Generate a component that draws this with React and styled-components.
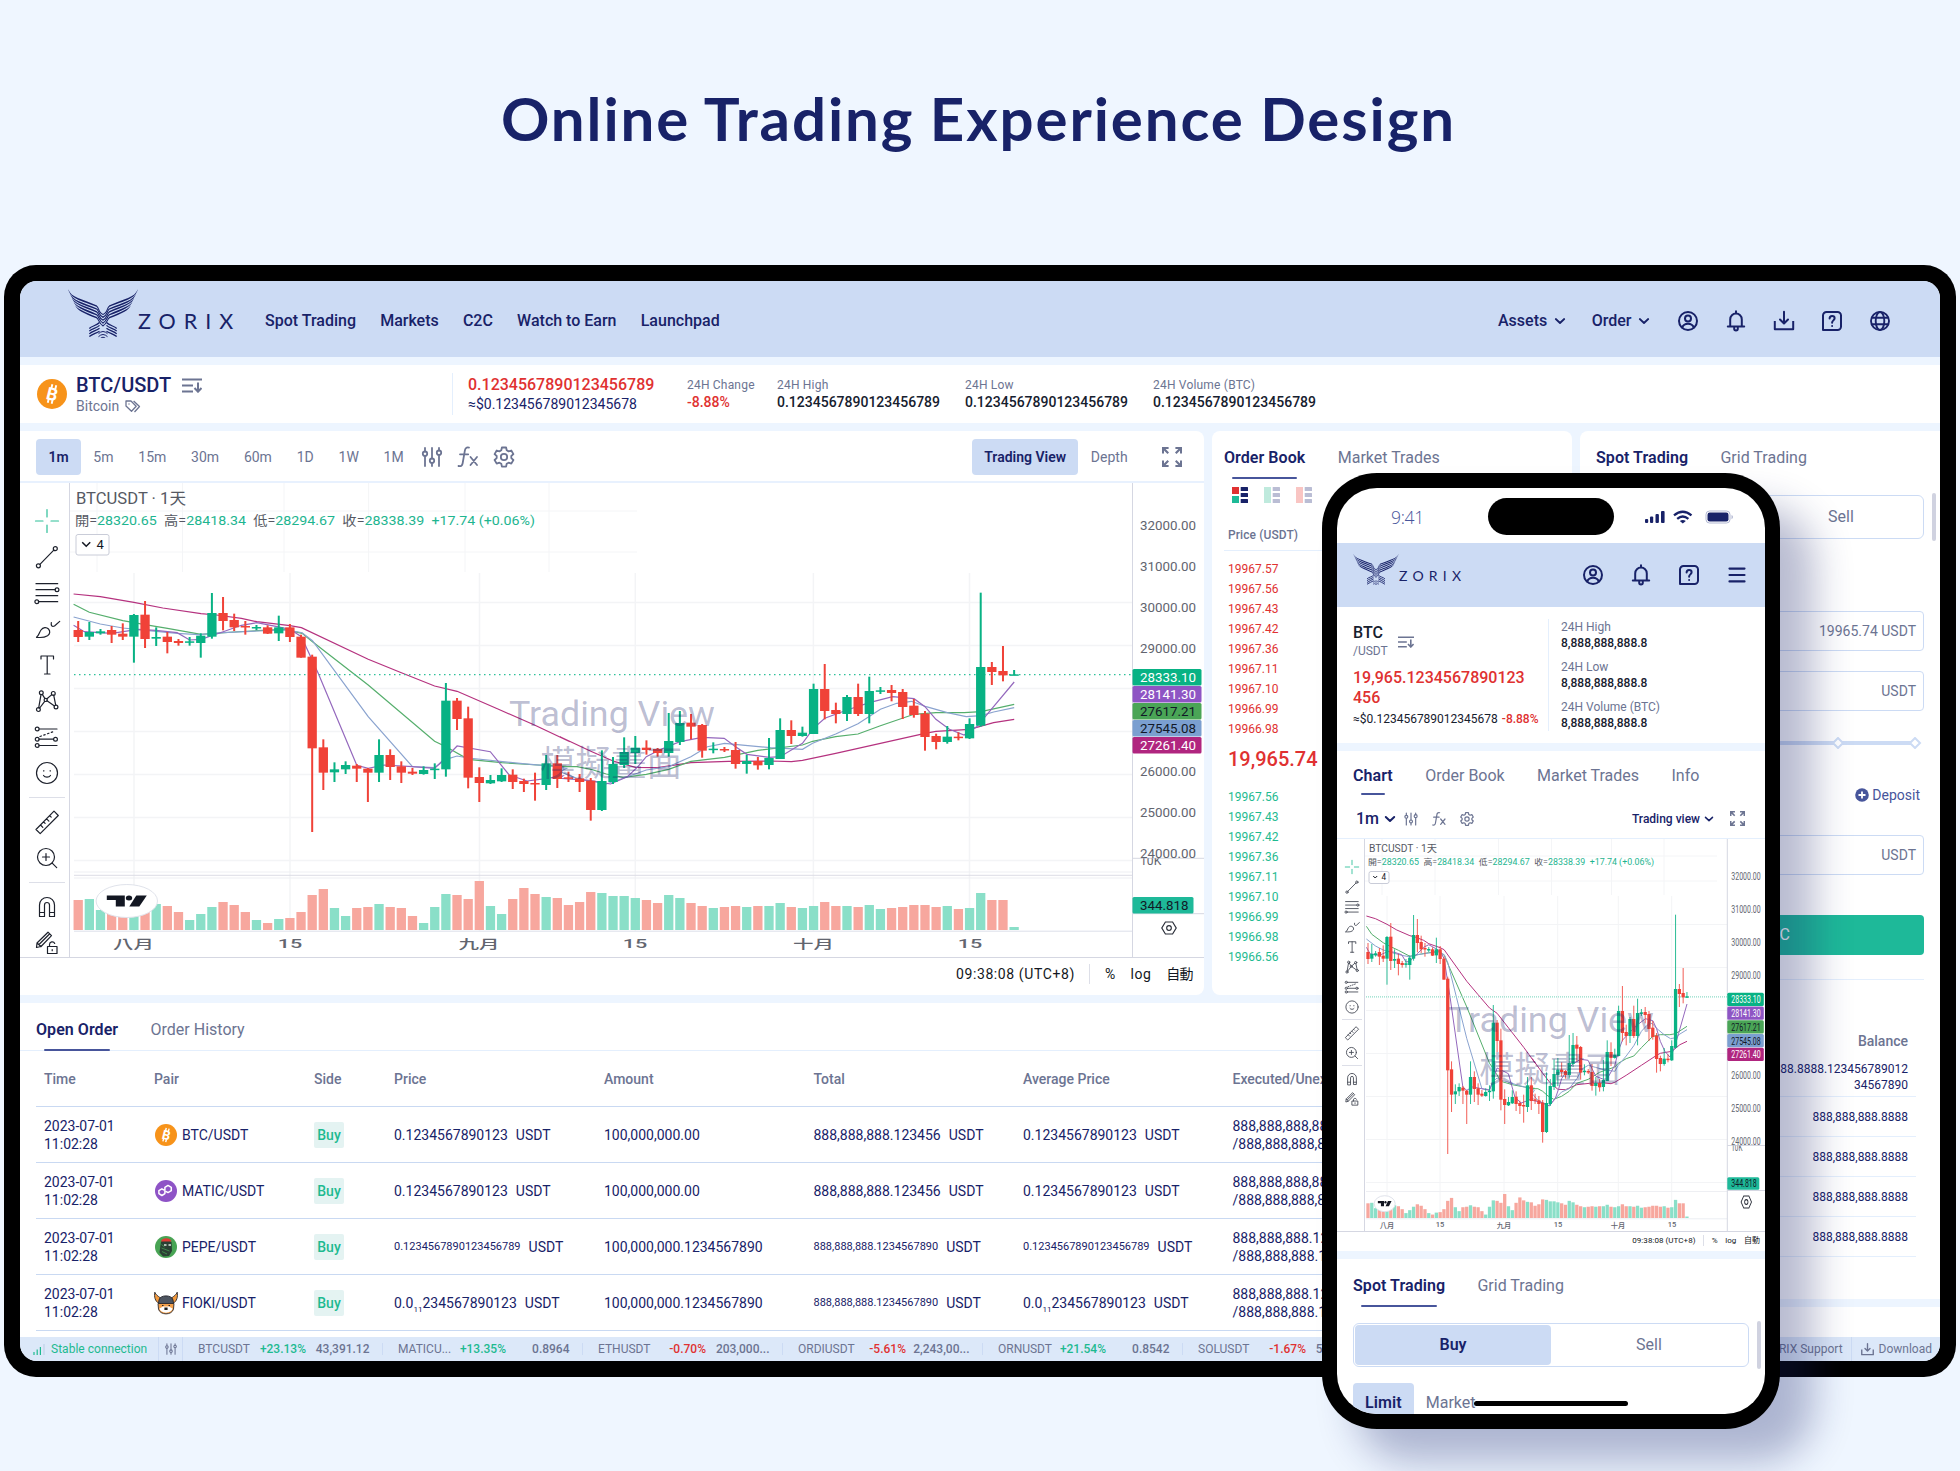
import React from "react";
import styled, { createGlobalStyle, css } from "styled-components";

const c = {
  page: "#eff6ff",
  gap: "#edf5ff",
  head: "#ccdbf4",
  foot: "#dce8f9",
  navy: "#182268",
  ink: "#16202e",
  grey: "#6c7492",
  rule: "#c9d9f2",
  soft: "#e4effd",
  red: "#e03131",
  green: "#1eba90",
  accent: "#47559b",
};

const FONT = 'Roboto, "Noto Sans CJK TC", sans-serif';

const GlobalStyle = createGlobalStyle`
  * { box-sizing: border-box; }
  body { margin: 0; background: ${c.page}; font-family: ${FONT}; color: ${c.navy}; }
  svg { display: block; flex: none; }
`;

/* ---------- shell ---------- */

const Stage = styled.div`
  position: relative;
  width: 1960px;
  height: 1471px;
  overflow: hidden;
  background: ${c.page};
  padding: 83px 4px 0;
`;
const Title = styled.h1`
  margin: 0;
  height: 182px;
  padding-right: 3px;
  text-align: center;
  font: 700 60px/70px Lato, sans-serif;
  letter-spacing: 1.9px;
  word-spacing: -1px;
  white-space: nowrap;
`;
const Tablet = styled.div`
  width: 1952px;
  height: 1112px;
  padding: 16px;
  border-radius: 32px;
  background: #000;
`;
const TabletScreen = styled.div`
  width: 1920px;
  height: 1080px;
  overflow: hidden;
  border-radius: 17px;
  background: ${c.gap};
  display: flex;
  flex-direction: column;
`;
const Phone = styled.div`
  position: absolute;
  left: 1322px;
  top: 473px;
  width: 458px;
  height: 956px;
  padding: 15px;
  border-radius: 55px;
  background: #000;
  box-shadow: 34px 33px 38px rgba(24, 34, 104, 0.3);
`;
const PhoneScreen = styled.div`
  position: relative;
  height: 926px;
  overflow: hidden;
  border-radius: 40px;
  background: #fff;
  display: flex;
  flex-direction: column;
  > * { flex: none; }
`;

/* ---------- icons ---------- */

const Svg = ({ size = 24, w = 1.6, children, color = "currentColor", box = 24 }) => (
  <svg width={size} height={size} viewBox={`0 0 ${box} ${box}`} fill="none" stroke={color} strokeWidth={w} strokeLinecap="round" strokeLinejoin="round" overflow="visible">
    {children}
  </svg>
);
const UserIcon = () => (
  <Svg w={2}>
    <circle cx="12" cy="12" r="9" />
    <circle cx="12" cy="9.600" r="3" />
    <path d="M6.200 18.600c.9-2.600 3-3.900 5.800-3.900s4.900 1.300 5.800 3.900" />
  </Svg>
);
const BellIcon = () => (
  <Svg w={2}>
    <path d="M12 2.200v2M3.800 17.600h16.400M6.200 17.400v-7a5.800 5.800 0 0 1 11.600 0v7" />
    <path d="M10.200 18.500v1.200a1.800 1.800 0 0 0 3.600 0v-1.200" />
  </Svg>
);
const DownloadIcon = ({ size = 24, w = 2 }) => (
  <Svg size={size} w={w}>
    <path d="M12 2.800v11.500M8 10.500l4 4 4-4" />
    <path d="M2.800 12v8.200h18.400V12" strokeLinecap="butt" />
  </Svg>
);
const HelpIcon = () => (
  <Svg w={2}>
    <path d="M3 21V6.500A3.500 3.500 0 0 1 6.500 3h11A3.500 3.500 0 0 1 21 6.500v11a3.500 3.500 0 0 1-3.500 3.500z" />
    <path d="M9.600 9.600c0-1.600 1-2.600 2.500-2.600s2.500 1 2.500 2.300c0 2-2.500 2.200-2.500 4.400" />
    <path d="M12.100 16.900v.2" />
  </Svg>
);
const GlobeIcon = () => (
  <Svg w={1.9}>
    <circle cx="12" cy="12" r="9" />
    <ellipse cx="12" cy="12" rx="4.300" ry="9" />
    <path d="M4 8.700h16M4 15.300h16" />
  </Svg>
);
const MenuIcon = () => (
  <Svg w={2.2}>
    <path d="M4.500 5.600h15M4.500 12h15M4.500 18.400h15" />
  </Svg>
);
const Chevron = ({ size = 12, w = 1.8 }) => (
  <Svg size={size} w={w} box={12}>
    <path d="M1.800 4l4.200 4 4.200-4" />
  </Svg>
);
const SortIcon = ({ width = 20 }) => (
  <svg width={width} height={width * 0.75} viewBox="0 0 20 15" fill="none" stroke={c.grey} strokeWidth="2">
    <path d="M0 1.500h20M0 7.500h11M0 13.500h11M16 4.500v9M12.500 10l3.500 3.700 3.500-3.700" />
  </svg>
);
const TagIcon = () => (
  <svg width="16" height="13" viewBox="0 0 16 13" fill="none" stroke={c.grey} strokeWidth="1.300" strokeLinejoin="round">
    <path d="M1 1h5l5.200 5.300-4.700 5L1 6z" />
    <path d="M8.600 1l5.900 5.500-5 5.500" />
    <circle cx="4" cy="4" r=".7" fill={c.grey} stroke="none" />
  </svg>
);
const SlidersIcon = ({ size = 24 }) => (
  <Svg size={size} w={1.8} color={c.grey}>
    <path d="M5 3v3.500M5 11v10M12 3v10.500M12 18v3M19 3v2.500M19 10v11" />
    <circle cx="5" cy="8.700" r="2.200" />
    <circle cx="12" cy="15.700" r="2.200" />
    <circle cx="19" cy="7.700" r="2.200" />
  </Svg>
);
const FxIcon = ({ size = 24 }) => (
  <Svg size={size} w={1.8} color={c.grey}>
    <path d="M13 2.600c-2.800-.6-3.800.8-4.200 3.200L6.700 18c-.4 2.600-1.600 3.600-4.200 3M4 9.300h8.200M14.500 12l6.500 8M21 12l-6.500 8" />
  </Svg>
);
const GearIcon = ({ size = 24 }) => (
  <Svg size={size} w={1.8} color={c.grey}>
    <path d="M9.900 2.500h4.200l.6 2.800 1.900 1.100 2.700-.9 2.100 3.600-2.100 1.900v2.100l2.100 1.900-2.100 3.600-2.700-.9-1.900 1.100-.6 2.800H9.900l-.6-2.800-1.900-1.100-2.700.9L2.600 15l2.100-1.900V11L2.600 9.100l2.100-3.600 2.700.9 1.900-1.100z" />
    <circle cx="12" cy="12" r="3.200" />
  </Svg>
);
const ExpandIcon = ({ size = 20 }) => (
  <svg width={size} height={size} viewBox="0 0 20 20" fill={c.grey}>
    {[0, 90, 180, 270].map((r) => (
      <path key={r} transform={`rotate(${r} 10 10)`} d="M0 0h6.600v2H3.600L7 5.500 5.500 7 2 3.600v3H0z" />
    ))}
  </svg>
);

const feathers = [0, 1, 2, 3, 4];
const Bird = ({ width = 70 }) => (
  <svg width={width} height={width * 0.714} viewBox="0 0 70 50" fill="none" stroke={c.navy} strokeWidth="1.100">
    {[false, true].map((flip) => (
      <g key={String(flip)} transform={flip ? "translate(70 0) scale(-1 1)" : undefined}>
        {feathers.map((k) => {
          const x = 0.3 + 1.7 * k;
          const y = 0.3 + 3.9 * k;
          return (
            <path key={k} stroke="none" fill={c.navy} d={`M${x} ${y}C${x + 2.4} ${y + 8.5 - k} ${14 + k * 0.6} ${9.8 + 3.1 * k} 29 ${16.5 + 2.9 * k}v1.4C${13.2 + k * 0.6} ${11.9 + 3.1 * k} ${x + 1.4} ${y + 9.1 - k} ${x} ${y}z`} />
          );
        })}
        {feathers.map((k) => (
          <path key={k} d={`M29 ${17.3 + 2.9 * k}C31 ${19.5 + 2.9 * k} 31 ${24.5 + 2.5 * k} 35.2 ${25.5 + 2.9 * k}`} />
        ))}
        {[0, 1, 2, 3].map((k) => (
          <path key={k} d={`M31.5 ${33.5 + k * 2.9}C28.5 ${37 + k * 2.4} 24 ${36.5 + k * 2.9} 21.3 ${39.5 + k * 2.7}`} strokeWidth="1.300" />
        ))}
        <path d="M35 42.500q-2.500.2-4.500 2.200M35 45.500q-2.500.2-4.500 2.200M35 48.300q-1.500 0-2.500 1" strokeWidth="1" />
      </g>
    ))}
  </svg>
);

const BtcCoin = ({ size = 22 }) => (
  <svg width={size} height={size} viewBox="0 0 30 30">
    <circle cx="15" cy="15" r="15" fill="#f7931a" />
    <g transform="rotate(14 15 15)" fill="#fff" stroke="#fff">
      <path d="M13 5.500v4M17 5.500v4M13 20.500v4M17 20.500v4" strokeWidth="1.900" />
      <text x="15.300" y="21.200" textAnchor="middle" stroke="none" fontFamily="Roboto, sans-serif" fontSize="17.500" fontWeight="700">B</text>
    </g>
  </svg>
);
const MaticCoin = () => (
  <svg width="22" height="22" viewBox="0 0 22 22" fill="none" stroke="#fff" strokeWidth="1.500">
    <circle cx="11" cy="11" r="11" fill="#8e53c6" stroke="none" />
    <path d="M10.800 11.300l2.200 1.300 3.300-1.900V7.300L13 5.400 9.900 7.300v6.300l-3 1.900-3-1.900v-3l3-1.800 2.200 1.300" strokeLinejoin="round" />
  </svg>
);
const PepeCoin = () => (
  <svg width="22" height="22" viewBox="0 0 22 22">
    <circle cx="11" cy="11" r="11" fill="#48a454" />
    <path d="M6 5.500L11 3l5.500 3 .5 9-3 5-6 .5-3.500-4z" fill="#2b4034" />
    <path d="M6 5.500C6.500 1 16 1 16.500 5.500z" fill="#e03a35" />
    <path d="M9 9h2.500M13.500 9H16" stroke="#dfe8df" strokeWidth="1.400" />
    <path d="M6.500 12l8 3M7 15.500l5 2.500M6.500 8.500l3 2.500" stroke="#3f8a4b" strokeWidth="1" />
  </svg>
);
const FlokiCoin = () => (
  <svg width="24" height="24" viewBox="0 0 24 24">
    <path d="M.8 1.200C1.800 4 4 5 6.500 7L5 12.500C1 10 0 6 .8 1.200zM23.200 1.200C22.200 4 20 5 17.500 7l1.500 5.500c4-2.500 5-6.500 4.200-11.300z" fill="#f39a3d" stroke="#2b2a30" strokeWidth=".9" />
    <path d="M5 9C6 3.500 18 3.500 19 9l.5 3.500h-15z" fill="#4d5560" stroke="#22242a" strokeWidth=".9" />
    <path d="M4 12.500h16l-.5 5.500c-1.500 6.500-13.500 6.500-15 0z" fill="#f4a04a" stroke="#2b2a30" strokeWidth=".9" />
    <path d="M5.500 17.500L9 15.500h6l3.500 2c-1 5.500-12 5.500-13 0z" fill="#fff" />
    <path d="M8 14.500h1.500M14.500 14.500H16M11 17h2v1.500h-2z" stroke="#222" strokeWidth="1.200" />
  </svg>
);

/* ---------- brand ---------- */

const BrandBox = styled.div`
  display: flex;
  width: ${(p) => (p.$small ? 120 : 197)}px;
  > svg { margin-top: ${(p) => (p.$small ? -12 : -15)}px; }
`;
const Word = styled.span`
  padding-top: ${(p) => (p.$small ? 1 : 2)}px;
  font: 400 ${(p) => (p.$small ? 14 : 21.5)}px / ${(p) => (p.$small ? 20 : 30)}px Lato, sans-serif;
  letter-spacing: ${(p) => (p.$small ? 5.2 : 8)}px;
`;
const Brand = ({ small }) => (
  <BrandBox $small={small}>
    <Bird width={small ? 46 : 70} />
    <Word $small={small}>ZORIX</Word>
  </BrandBox>
);

/* ---------- header ---------- */

const Header = styled.header`
  height: 76px;
  padding: 4px 48px 0;
  background: ${c.head};
  display: flex;
  align-items: center;
  font: 500 16px/24px ${FONT};
`;
const Nav = styled.nav`
  display: flex;
  gap: 24.2px;
  flex: 1;
`;
const Dropdown = styled.span`
  display: flex;
  align-items: center;
  gap: 6.5px;
  margin-right: 26px;
`;
const IconRow = styled.div`
  display: flex;
  gap: 24px;
`;

/* ---------- pair bar ---------- */

const PairBar = styled.section`
  height: 58px;
  margin: 8px 0;
  padding: 0 17px;
  background: #fff;
  display: flex;
  align-items: center;
`;
const PairInfo = styled.div`
  width: 415px;
  display: flex;
  align-items: center;
  gap: 9px;
`;
const PairName = styled.div`
  display: flex;
  align-items: center;
  gap: 11px;
  padding-top: 2px;
  font: 500 20px/23px ${FONT};
`;
const PairSub = styled.div`
  display: flex;
  align-items: center;
  gap: 6px;
  font: 400 14px/19px ${FONT};
  color: ${c.grey};
`;
const PriceCol = styled.div`
  width: 235px;
  height: 42px;
  padding: 1px 0 0 15px;
  border-left: 1px solid ${c.soft};
  font: 400 14px/20px ${FONT};
  strong { display: block; margin-bottom: -2px; font: 500 16px/22px ${FONT}; color: ${c.red}; }
`;
const Stat = styled.div`
  width: ${(p) => p.$w || 188}px;
  padding-bottom: ${(p) => (p.$tight ? 0 : 2)}px;
  font: 400 12px / ${(p) => (p.$tight ? 16 : 18)}px ${FONT};
  letter-spacing: ${(p) => (p.$tight ? 0 : 0.2)}px;
  color: ${c.grey};
  b {
    display: block;
    font: 500 ${(p) => (p.$tight ? 12 : 14)}px/16px ${FONT};
    letter-spacing: 0;
    color: ${(p) => (p.$down ? c.red : c.ink)};
  }
`;

/* ---------- body layout ---------- */

const Body = styled.main`
  display: flex;
  gap: 8px;
  height: 906px;
`;
const Column = styled.div`
  width: ${(p) => p.$w}px;
  display: flex;
  flex-direction: column;
  gap: 8px;
`;
const TopRow = styled.div`
  display: flex;
  gap: 8px;
  height: 564px;
`;
const Card = styled.section`
  width: ${(p) => (p.$w ? p.$w + "px" : "auto")};
  height: ${(p) => (p.$h ? p.$h + "px" : "auto")};
  flex: ${(p) => (p.$grow ? 1 : "none")};
  border-radius: ${(p) => p.$r || 0};
  background: #fff;
  overflow: hidden;
`;

/* ---------- tabs ---------- */

const TabBar = styled.div`
  height: ${(p) => p.$h || 48}px;
  padding: ${(p) => (p.$h ? 14 : 16)}px ${(p) => p.$px ?? 16}px 0;
  display: flex;
  gap: 32.4px;
  font: 400 16px/22px ${FONT};
  color: ${c.grey};
  ${(p) => p.$line && css`box-shadow: inset 0 -1px 0 ${c.soft};`}
`;
const TabItem = styled.span`
  display: flex;
  flex-direction: column;
  justify-content: space-between;
  ${(p) => p.$on && css`
    color: ${c.navy};
    font-weight: 600;
    letter-spacing: 0.06px;
    &::after { content: ""; height: 2px; margin: 0 8px; background: ${c.accent}; border-radius: 1px; }
  `}
`;
const Tabs = ({ items, ...rest }) => (
  <TabBar {...rest}>
    {items.map((t, i) => (
      <TabItem key={t} $on={i === 0}>{t}</TabItem>
    ))}
  </TabBar>
);

/* ---------- chart ---------- */

const G = 1;
const R = 0;
/* wick top, body top, body bottom, wick bottom, direction, volume */
const candles = [
  [453, 480, 501, 516, R, 90], [456, 486, 500, 510, G, 93], [477, 484, 490, 494, G, 60], [468, 480, 494, 519, R, 50],
  [460, 491, 500, 510, R, 50], [432, 435, 500, 578, G, 60], [393, 434, 507, 534, R, 55], [472, 501, 506, 528, G, 78],
  [486, 500, 516, 550, R, 72], [507, 513, 519, 527, R, 54], [501, 514, 517, 527, G, 30], [490, 497, 519, 563, G, 48],
  [369, 429, 500, 506, G, 69], [381, 429, 453, 481, R, 84], [431, 450, 472, 483, R, 75], [453, 468, 472, 494, R, 54],
  [465, 471, 474, 480, G, 30], [466, 472, 491, 492, R, 21], [437, 472, 490, 513, G, 33], [462, 472, 501, 516, R, 36],
  [494, 500, 563, 563, R, 54], [554, 560, 835, 1086, R, 105], [808, 832, 908, 960, R, 123], [877, 898, 907, 936, G, 66],
  [874, 885, 898, 912, G, 42], [882, 887, 896, 936, R, 66], [894, 896, 908, 996, R, 69], [808, 855, 908, 936, G, 78],
  [838, 855, 891, 930, R, 69], [874, 889, 908, 939, R, 66], [894, 905, 911, 915, R, 42], [889, 900, 912, 914, G, 21],
  [880, 896, 900, 927, G, 69], [639, 692, 898, 920, G, 108], [684, 692, 747, 780, R, 105], [710, 745, 923, 955, R, 93],
  [892, 921, 939, 996, R, 147], [915, 930, 940, 942, G, 72], [895, 915, 934, 936, G, 48], [898, 914, 936, 957, R, 93],
  [926, 933, 942, 966, R, 126], [908, 939, 943, 992, R, 108], [855, 880, 945, 960, G, 99], [855, 880, 927, 954, R, 96],
  [905, 922, 926, 936, R, 75], [912, 925, 936, 966, R, 84], [924, 932, 1020, 1052, R, 114], [841, 933, 1020, 1023, G, 111],
  [861, 882, 936, 942, G, 102], [802, 846, 885, 894, G, 102], [798, 833, 849, 882, G, 96], [811, 833, 840, 854, R, 90],
  [834, 837, 849, 860, R, 81], [729, 813, 849, 860, G, 105], [723, 759, 816, 825, G, 96], [732, 758, 770, 808, R, 81],
  [762, 765, 842, 863, R, 72], [817, 836, 840, 850, G, 66], [831, 837, 841, 846, R, 69], [816, 840, 882, 896, R, 72],
  [855, 873, 882, 911, G, 69], [861, 873, 886, 899, R, 72], [804, 864, 885, 898, G, 72], [745, 780, 867, 867, G, 81],
  [751, 780, 798, 822, R, 69], [770, 788, 798, 800, G, 66], [641, 657, 792, 792, G, 72], [582, 657, 723, 748, R, 84],
  [698, 720, 732, 760, R, 72], [675, 681, 732, 753, G, 72], [641, 681, 732, 738, R, 69], [620, 663, 732, 760, G, 75],
  [651, 661, 664, 672, G, 63], [645, 660, 669, 694, R, 66], [657, 666, 711, 747, R, 69], [687, 707, 735, 743, R, 75],
  [723, 731, 801, 842, R, 75], [791, 798, 816, 838, R, 69], [768, 800, 816, 821, G, 72], [787, 800, 803, 811, R, 63],
  [745, 762, 805, 807, G, 66], [368, 591, 767, 770, G, 111], [576, 591, 606, 645, R, 90], [528, 603, 616, 634, R, 90],
  [600, 613, 615, 615, G, 9],
];

/* moving averages: the first list spans bars 0-45, the second bars 44-84 */
const early = ([x, v]) => [(x - 163) / 31.2, v];
const late = ([x, v]) => [44 + (x - 20) / 26.47, v + 270];
const averages = [
  ["#b5327f", [[150, 372], [225, 380], [319, 397], [400, 414], [507, 431], [550, 435], [620, 445], [663, 455], [756, 467], [788, 473], [975, 568], [1068, 608], [1161, 648], [1224, 664], [1340, 718], [1442, 766], [1540, 815]],
    [[0, 530], [73, 574], [126, 603], [179, 622], [232, 623], [311, 608], [400, 604], [500, 603], [550, 605], [576, 601], [655, 580], [761, 550], [867, 520], [893, 514], [973, 508], [1030, 488], [1079, 478]]],
  ["#55ae6c", [[150, 403], [194, 427], [288, 452], [350, 464], [413, 475], [507, 493], [600, 486], [663, 482], [740, 478], [790, 490], [819, 515], [975, 645], [1161, 814], [1193, 830], [1255, 868], [1349, 878], [1450, 885], [1530, 889]],
    [[0, 620], [40, 620], [73, 628], [110, 642], [150, 652], [205, 643], [258, 628], [311, 604], [391, 592], [470, 571], [576, 555], [600, 544], [655, 530], [708, 522], [761, 497], [841, 463], [893, 458], [960, 458], [1000, 455], [1079, 433]]],
  ["#8aa3cf", [[150, 441], [225, 462], [288, 474], [360, 482], [440, 490], [500, 494], [569, 488], [663, 483], [750, 480], [790, 488], [819, 512], [975, 740], [1099, 890], [1161, 893], [1193, 868], [1224, 858], [1255, 864], [1400, 880], [1500, 890], [1530, 895]],
    [[0, 635], [40, 655], [110, 672], [150, 655], [205, 630], [258, 620], [311, 590], [350, 560], [391, 550], [440, 556], [500, 563], [576, 568], [600, 550], [655, 522], [708, 491], [761, 448], [800, 430], [835, 424], [870, 440], [920, 458], [965, 470], [1000, 467], [1030, 456], [1079, 443]]],
  ["#9468bd", [[150, 466], [180, 485], [257, 490], [330, 478], [380, 481], [440, 488], [475, 510], [507, 508], [569, 485], [620, 466], [663, 458], [720, 470], [756, 478], [788, 500], [835, 610], [943, 886], [975, 895], [1020, 885], [1099, 890], [1161, 895], [1190, 865], [1224, 828], [1317, 845], [1370, 915], [1420, 933], [1473, 926], [1520, 918]],
    [[0, 655], [73, 662], [120, 672], [160, 650], [185, 620], [205, 590], [240, 568], [285, 545], [338, 532], [390, 535], [417, 560], [444, 583], [497, 592], [523, 590], [576, 550], [602, 505], [629, 475], [682, 450], [735, 428], [790, 410], [841, 416], [867, 440], [893, 478], [925, 508], [960, 525], [990, 500], [1020, 455], [1079, 366]]],
].map(([color, a, b]) => [color, [...a.map(early), ...b.map(late)]]);

const badges = [
  ["28333.10", "#08b284", "#fff"],
  ["28141.30", "#8e55c4", "#fff"],
  ["27617.21", "#4aa556", "#111827"],
  ["27545.08", "#7b9fd0", "#111827"],
  ["27261.40", "#b0257f", "#fff"],
];

const wide = {
  w: 1134, h: 474, x0: 8.2, dx: 11.142, y0: -13, left: 4, body: 9.3, wick: 2, ma: 1.2,
  gridX: [64, 220, 409.5, 565.3, 743.4, 899.5], grid: 119.5, gridTop: 90, gridW: 1.5,
  topX: [27, 112.5, 214, 298.6, 395, 479], topY: [28, 69], topW: 567, dot: 191.7,
  axis: 1062.5, vol: 447, volK: 1, rules: [389, 392.3, 395], base: 447.7,
  labels: [42.6, 83.7, 124.3, 165.7, 288.7, 329.7, 370.7], lx: 1070, lw: 56, fs: 12.5,
  tenK: 375.3, badge: 186, bh: 17, bw: 69, last: [414, 16.5, 61], lastLine: 430.7, hex: [1099, 445, 1],
  dates: ["八月", "15", "九月", "15", "十月", "15"], dy: 465.5, dfs: 12.5, dw: [41, 24.5], dateX: [63.5, 220, 409, 565, 743.5, 900],
  tv: [56.8, 418, 30.7, 16.5], mark: [542, 243, 292.5], legend: [6, 21, 110, 16, 42.3, 460, 13, 6, 51, 33, 20.5, 4],
};
const narrow = {
  w: 400, h: 392, x0: 3, dx: 3.797, y0: -47, left: 1, body: 3.3, wick: 1, ma: 1,
  gridX: [22, 75, 139, 192.7, 253.3, 306.7], grid: 85.5, gridTop: 57, gridW: 1,
  topX: [17, 70, 133.5, 186.5, 246.5, 299], topY: [17, 42], topW: 352, dot: 157.9,
  axis: 362.3, vol: 379, volK: 0.49, rules: [352.5], base: 379.3,
  labels: [37.7, 70.7, 103.7, 136.7, 236.3, 269.7, 302.7], lx: 366.3, lw: 29.3, fs: 10.5,
  tenK: 306.5, badge: 153.7, bh: 13.75, bw: 36.5, last: [338.3, 12.4, 32], lastLine: 351.5, hex: [381.3, 363, 0.72],
  dates: ["八月", "15", "九月", "15", "十月", "15"], dy: 388.5, dfs: 7.3, dw: [14.5, 8.5], dateX: [22, 75, 139, 193, 253, 307],
  tv: [19.7, 364.7, 10.5, 8], mark: [186, 193, 243], legend: [4, 13, 68, 10, 26.2, 286, 8.2, 4, 32, 20, 12, 2.5],
};

const Fit = ({ w, children, ...rest }) => (
  <text textLength={w} lengthAdjust="spacingAndGlyphs" {...rest}>{children}</text>
);

const Plot = ({ s }) => {
  const X = (i) => s.x0 + s.dx * i;
  const Y = (v) => s.y0 + v / 3;
  const [lx, ly, lw, lf, oy, ow, of, bx, by, bw, bh] = s.legend;
  const small = s === narrow;
  return (
    <svg width={s.w} height={s.h} viewBox={`0 0 ${s.w} ${s.h}`} fontFamily={FONT}>
      <g stroke="#f4f5f7" strokeWidth="1">
        {s.topX.map((x) => <path key={x} d={`M${x} 0V${s.gridTop - 1}`} />)}
        {s.topY.map((y) => <path key={y} d={`M0 ${y}H${s.topW}`} />)}
      </g>
      <g stroke="#f3f4f6" strokeWidth={s.gridW}>
        {s.gridX.map((x) => <path key={x} d={`M${x} ${s.gridTop}V${s.base}`} />)}
        {[0, 1, 2, 3, 4, 5, 6].map((k) => <path key={k} d={`M${s.left} ${s.grid + 43 * k}H${s.axis}`} />)}
      </g>
      {s.rules.map((y, i) => (
        <path key={y} d={`M${s.left} ${y}H${s.axis}`} stroke={i === 1 ? "#dcdde5" : "#eeeff3"} />
      ))}
      <path d={`M${s.left} ${s.base + 0.5}H${s.axis}`} stroke={small ? "#eceef3" : "#dcdfea"} />
      {candles.map((k, i) => {
        const h = (k[5] / 3) * s.volK;
        return <rect key={i} x={X(i) - s.body / 2} y={s.vol - h} width={s.body} height={h} fill={k[4] ? "#8adfc8" : "#f7a79e"} />;
      })}
      {averages.map(([color, pts]) => (
        <polyline key={color} fill="none" stroke={color} strokeWidth={s.ma} points={pts.map(([i, v]) => `${X(i).toFixed(1)},${Y(v).toFixed(1)}`).join(" ")} />
      ))}
      <path d={`M${s.left} ${s.dot}H${s.axis}`} stroke={small ? "#8edcc8" : "#2cbf98"} strokeWidth="1.200" strokeDasharray={small ? "1 1" : "1.500 3.500"} />
      {candles.map((k, i) => (
        <g key={i} fill={k[4] ? "#08b284" : "#f04238"}>
          <rect x={X(i) - s.wick / 2} y={Y(k[0])} width={s.wick} height={(k[3] - k[0]) / 3} opacity={small ? 0.85 : 1} />
          <rect x={X(i) - s.body / 2} y={Y(k[1])} width={s.body} height={Math.max((k[2] - k[1]) / 3, 1.5)} />
        </g>
      ))}
      <g fill="#182268" fillOpacity=".3" fontSize="35.500" textAnchor="middle">
        <Fit w={206} x={s.mark[0]} y={s.mark[1]}>Trading View</Fit>
        <Fit w={142} x={s.mark[0] - 1} y={s.mark[2]}>模擬畫面</Fit>
      </g>
      <ellipse cx={s.tv[0]} cy={s.tv[1]} rx={s.tv[2]} ry={s.tv[3]} fill="#fff" stroke="#e0e3eb" />
      <g transform={`translate(${s.tv[0]} ${s.tv[1]}) scale(${s.tv[2] / 30.7} ${s.tv[3] / 16.5})`} fill="#131722">
        <path d="M-20-5.500h18v11h-9v-6.500h-9z" />
        <ellipse cx="2.200" cy="-3" rx="3.200" ry="2.500" />
        <path d="M9.500-5.500H20L12.500 5.500H2.500z" />
      </g>
      {s.dates.map((d, i) => (
        <Fit key={i} x={s.dateX[i]} y={s.dy - (i % 2 ? 0.3 : 0)} w={s.dw[i % 2]} fontSize={s.dfs} fill="#62656f" textAnchor="middle" fontWeight="500">{d}</Fit>
      ))}
      <path d={`M${s.axis} 0V${s.h}M${s.axis} ${s.tenK}H${s.w}M${s.axis} ${s.lastLine}H${s.w}`} stroke="#d5d7e2" fill="none" />
      <g fill="#62656f" fontSize={s.fs}>
        {s.labels.map((y, i) => (
          <Fit key={y} x={s.lx} y={y + s.fs * 0.36} w={s.lw}>{[32, 31, 30, 29, 26, 25, 24][i]}000.00</Fit>
        ))}
        <clipPath id={`axis-${s.w}`}><rect x={s.axis} y={s.tenK} width="60" height="20" /></clipPath>
        <Fit x={s.lx} y={s.tenK + s.fs * 0.5} w={s.lw * 0.38} clipPath={`url(#axis-${s.w})`}>10K</Fit>
      </g>
      {badges.map(([t, bg, fg], i) => (
        <g key={t}>
          <rect x={s.axis} y={s.badge + s.bh * i} width={s.bw} height={s.bh - 0.4} rx="1.500" fill={bg} />
          <Fit x={s.lx} y={s.badge + s.bh * (i + 0.5) + s.fs * 0.36} w={s.lw} fontSize={s.fs} fill={fg}>{t}</Fit>
        </g>
      ))}
      <rect x={s.axis} y={s.last[0]} width={s.last[2]} height={s.last[1]} rx="1.500" fill="#1eb999" />
      <Fit x={s.lx} y={s.last[0] + s.last[1] / 2 + s.fs * 0.36} w={s.lw * 0.865} fontSize={s.fs} fill="#111827">344.818</Fit>
      <g transform={`translate(${s.hex[0]} ${s.hex[1]}) scale(${s.hex[2]} 1)`} fill="none" stroke="#2a2e39" strokeWidth="1.200">
        <path d="M-3.600-6h7.200L7.200 0 3.600 6h-7.200L-7.200 0z" />
        <circle r="2.300" />
      </g>
      <Fit x={lx} y={ly - 0.5} w={lw} fontSize={lf} fill="#565963">BTCUSDT · 1天</Fit>
      <Fit x={lx - 1} y={oy} w={ow} fontSize={of} fill="#1eb590">
        {[["開", "28320.65"], ["高", "28418.34"], ["低", "28294.67"], ["收", "28338.39"]].map(([k, v]) => (
          <React.Fragment key={k}><tspan fill="#565963">{k}=</tspan>{v}{"\u2002"}</React.Fragment>
        ))}
        +17.74 (+0.06%)
      </Fit>
      <rect x={bx} y={by + 0.5} width={bw} height={bh} rx="2" fill="#fff" stroke="#c9ccd8" />
      <path transform={`translate(${bx + bw * 0.31} ${by + bh / 2})`} d={small ? "M-2-1L0 1 2-1" : "M-4-2L0 2 4-2"} stroke="#131722" strokeWidth={small ? 1 : 1.5} fill="none" />
      <text x={bx + bw * 0.62} y={by + bh / 2 + of * 0.4} fontSize={of} fill="#131722">4</text>
    </svg>
  );
};

const toolShapes = [
  <path key="a" stroke="#2cbf98" d="M12 .5v7.500M12 16v7.500M.5 12H8M16 12h7.500" />,
  <g key="b"><circle cx="3.400" cy="20.800" r="2" /><circle cx="20.300" cy="3.700" r="2" /><path d="M4.900 19.300L18.800 5.200" /></g>,
  <g key="c"><path d="M1 2.700h21.700M1 8.700h19.400M1 14.700h21.700M3.400 20.700h19.300" /><circle cx="22" cy="8.700" r="1.900" /><circle cx="1.800" cy="20.700" r="1.900" /></g>,
  <g key="d"><path d="M1.500 20.300c2.500-1.500 2.500-4.500 4.500-7.300 2-2.800 5.500-3 7.500-1 2 2.200 1.500 5-1 6.700-3 1.900-7.500 2-11 1.600z" /><path d="M16.300 5.500c-.5 3 .7 4.700 3.200 3.500l5.200-4.600" /></g>,
  <path key="e" d="M6 6V3h12.500v3M12.200 3v18M9.500 21h5.500" />,
  <g key="f"><path d="M3.700 18.800L6 5.600M7.300 5.400l2.500 4M12 11.700l7.500 5.300M16.800 5.600L12 9.800M9.700 12.400L4.700 19M18.700 6.200l2 10" /><circle cx="6.300" cy="3.800" r="1.900" /><circle cx="3.400" cy="20.600" r="1.900" /><circle cx="21" cy="18" r="1.900" /><circle cx="18.300" cy="4.400" r="1.900" /><circle cx="10.700" cy="10.900" r="1.600" /></g>,
  <g key="g"><path d="M4 4h18M4 14.200h14.500M4 20.500h18" /><path d="M5 11.500l15-5.500" strokeDasharray="1.500 2.500" /><circle cx="2.200" cy="4" r="1.900" /><circle cx="2.200" cy="14.200" r="1.900" /><circle cx="20.500" cy="14.200" r="1.900" /><circle cx="2.200" cy="20.500" r="1.900" /></g>,
  <g key="h"><circle cx="12" cy="12" r="10.500" /><path d="M8.500 14.500c1.500 2.200 5.500 2.200 7 0M8.800 9.500v.6M15.200 9.500v.6" /></g>,
  "rule",
  <path key="i" d="M1 19.500L19 1.200l4.300 4.300L5.200 23.600zM5.500 15l2.300 2.300M8.600 11.900l1.500 1.500M11.600 8.800l2.300 2.300M14.700 5.700l1.500 1.500" />,
  <g key="j"><circle cx="11" cy="11" r="8.500" /><path d="M17.200 17.200l4.500 4.500M11 7.500v7M7.500 11h7" /></g>,
  "rule",
  <path key="k" d="M4.500 21.500V10a7.500 7.500 0 0 1 15 0v11.500h-5V10a2.500 2.500 0 0 0-5 0v11.500zM4.500 17.500h5M14.500 17.500h5" />,
  <g key="l"><path d="M1.500 16.500L2 12 13 1.200l3.500 3.500L6 15.500zM4 13.500L14.500 3M2 12l4 3.500" /><path d="M12.500 15.500H22v7h-9.500zM14.500 15.500v-2a2.700 2.700 0 0 1 5.200-1M17.200 18.500v1.200" /></g>,
];

const ToolColumn = styled.div`
  width: ${(p) => (p.$small ? 28 : 50)}px;
  height: ${(p) => (p.$small ? 392 : 474)}px;
  padding: ${(p) => (p.$small ? "18px 0 0 3px" : "20px 0 0 5px")};
  border-right: 1px solid #d5d7e2;
  overflow: hidden;
  display: flex;
  flex-direction: column;
  align-items: center;
`;
const ToolCell = styled.div`
  height: ${(p) => (p.$small ? 20 : 36)}px;
  flex: none;
  display: flex;
  align-items: center;
`;
const ToolRule = styled.div`
  flex: none;
  width: ${(p) => (p.$small ? 20 : 36)}px;
  height: 1px;
  margin: ${(p) => (p.$small ? "2px 0 3px" : "6px 0")};
  background: #dddfe8;
`;
const WidgetRow = styled.div`
  display: flex;
`;
const WidgetFoot = styled.div`
  height: ${(p) => (p.$small ? 20 : 38)}px;
  border-top: 1px solid #d5d7e2;
  padding: ${(p) => (p.$small ? "0 5px 2px 0" : "0 11px 5px 0")};
  display: flex;
  justify-content: flex-end;
  align-items: center;
  gap: ${(p) => (p.$small ? 7.6 : 14.6)}px;
  font-size: ${(p) => (p.$small ? 8 : 14)}px;
  letter-spacing: ${(p) => (p.$small ? 0.05 : 0.6)}px;
  color: #131722;
  i { width: 1px; height: 60%; background: #dddfe8; }
  .cjk { letter-spacing: ${(p) => (p.$small ? 0 : -0.6)}px; padding-bottom: 2px; }
`;
const Widget = ({ small }) => (
  <div>
    <WidgetRow>
      <ToolColumn $small={small}>
        {toolShapes.map((t, i) =>
          t === "rule" ? <ToolRule key={i} $small={small} /> : (
            <ToolCell key={i} $small={small}><Svg size={small ? 14 : 24} w={small ? 1.5 : 1.2} color={small ? "#444853" : "#1d212c"}>{t}</Svg></ToolCell>
          )
        )}
      </ToolColumn>
      <Plot s={small ? narrow : wide} />
    </WidgetRow>
    <WidgetFoot $small={small}>
      <span>09:38:08 (UTC+8)</span><i /><span>%</span><span>log</span><span className="cjk">自動</span>
    </WidgetFoot>
  </div>
);

const Toolbar = styled.div`
  height: 52px;
  padding: 8px 22px 6px 16px;
  border-bottom: 2px solid #e8f1fe;
  display: flex;
  align-items: center;
`;
const Chip = styled.span`
  height: 36px;
  padding: 0 12.4px;
  border-radius: 4px;
  font: 400 14px/36px ${FONT};
  color: ${c.grey};
  ${(p) => p.$on && css`background: ${c.head}; color: ${c.navy}; font-weight: 600;`}
`;
const ToolIcons = styled.div`
  display: flex;
  gap: 12px;
  margin-left: 4px;
  flex: 1;
`;
const Spacer = styled.span`
  width: ${(p) => p.$w}px;
`;

/* ---------- order book ---------- */

const ViewIcons = styled.div`
  display: flex;
  gap: 16px;
  padding: 8px 20px 0;
`;
const ViewIcon = ({ left, right }) => (
  <svg width="16" height="16" viewBox="0 0 16 16">
    {left.length === 2 ? (
      <><rect width="7" height="7" fill={left[0]} /><rect y="9" width="7" height="7" fill={left[1]} /></>
    ) : <rect width="7" height="16" fill={left[0]} />}
    {[0, 6, 12].map((y) => <rect key={y} x="8.700" y={y} width="7.300" height="4" rx=".5" fill={right} />)}
  </svg>
);
const BookHead = styled.div`
  height: 48px;
  margin: 0 12px 8px;
  padding: 24px 4px 0;
  border-bottom: 1px solid ${c.soft};
  font: 500 12px/16px ${FONT};
  letter-spacing: 0.1px;
  color: ${c.grey};
`;
const Quote = styled.div`
  padding-left: 16px;
  font: 400 12px/20px ${FONT};
  color: ${(p) => (p.$up ? c.green : c.red)};
`;
const LastPrice = styled.div`
  padding-left: 16px;
  margin-bottom: 8px;
  font: 500 20px/40px ${FONT};
  color: ${c.red};
`;
const asks = ["19967.57", "19967.56", "19967.43", "19967.42", "19967.36", "19967.11", "19967.10", "19966.99", "19966.98"];
const bids = ["19967.56", "19967.43", "19967.42", "19967.36", "19967.11", "19967.10", "19966.99", "19966.98", "19966.56"];

/* ---------- trade form ---------- */

const FormRow = styled.div`
  display: flex;
  gap: 8px;
  padding: 16px 0 0 16px;
`;
const Form = styled.div`
  width: ${(p) => p.$w}px;
`;
const Thumb = styled.div`
  width: 4px;
  height: 48px;
  margin-top: -2px;
  border-radius: 2px;
  background: #d0d2e0;
`;
const Segment = styled.div`
  height: 44px;
  padding: 1px;
  border: 1px solid ${c.head};
  border-radius: 6px;
  display: flex;
`;
const SegmentItem = styled.span`
  flex: 1;
  border-radius: 4px;
  text-align: center;
  font: 400 16px/39px ${FONT};
  color: ${c.grey};
  ${(p) => p.$on && css`background: ${c.head}; color: ${c.navy}; font-weight: 600;`}
`;
const Field = styled.div`
  height: 40px;
  margin-top: ${(p) => p.$mt}px;
  padding: 0 7px;
  border: 1px solid ${c.head};
  border-radius: 4px;
  text-align: right;
  font: 400 14px/39px ${FONT};
  color: ${c.grey};
`;
const SliderWrap = styled.div`
  margin-top: 26px;
`;
const Slider = () => (
  <svg width="328" height="12" viewBox="0 0 328 12" fill="#fff" stroke={c.head}>
    <path d="M4 6h314" strokeWidth="4" />
    {[8, 86, 164, 242, 319].map((x) => (
      <path key={x} d={`M${x - 5} 6l5-5 5 5-5 5z`} strokeWidth="2" />
    ))}
  </svg>
);
const Deposit = styled.div`
  display: flex;
  justify-content: flex-end;
  align-items: center;
  gap: 3px;
  height: 20px;
  margin-top: 36px;
  padding-right: 4px;
  font: 400 14px/20px ${FONT};
  color: ${c.accent};
`;
const Submit = styled.div`
  height: 40px;
  margin-top: 40px;
  border-radius: 4px;
  background: #1eb999;
  color: #fff;
  text-align: center;
  font: 400 16px/39px ${FONT};
`;
const BalanceHead = styled.div`
  margin-top: 24px;
  padding: 51px 16px 9px 0;
  border-top: 1px solid ${c.soft};
  text-align: right;
  font: 500 14px/20px ${FONT};
  color: ${c.grey};
`;
const Balance = styled.div`
  height: ${(p) => (p.$double ? 37 : 40)}px;
  margin-right: 8px;
  padding: ${(p) => (p.$double ? 1 : 0)}px 8px 0 0;
  border-bottom: 1px solid ${c.soft};
  text-align: right;
  font: 400 12px / ${(p) => (p.$double ? 16 : 40)}px ${FONT};
`;

/* ---------- orders ---------- */

const Row = styled.div`
  height: 56px;
  margin-left: 16px;
  padding-left: 8px;
  border-bottom: 1px solid ${c.rule};
  display: grid;
  grid-template-columns: 110px 160px 80px 210px 209.5px 209.5px 209.5px 1fr;
  align-items: center;
  font: ${(p) => (p.$head ? 500 : 400)} 14px/18px ${FONT};
  color: ${(p) => (p.$head ? c.grey : c.navy)};
  white-space: nowrap;
`;
const PairCell = styled.div`
  display: flex;
  align-items: center;
  gap: 5px;
  height: 26px;
  > svg { margin-left: ${(p) => (p.$wide ? 0 : 1)}px; margin-right: ${(p) => (p.$wide ? -1 : 0)}px; }
`;
const Side = styled.span`
  width: 30px;
  height: 26px;
  border-radius: 2px;
  background: #e4f3f2;
  color: ${c.green};
  text-align: center;
  font: 500 14px/26px ${FONT};
`;
const Money = styled.span`
  display: flex;
  gap: 8px;
  align-items: center;
  > b { font-weight: 400; font-size: ${(p) => (p.$small ? 11 : 14)}px; }
  sub { font-size: 8px; line-height: 0; vertical-align: -4px; }
`;
const tiny = <>0.0<sub>11</sub>234567890123</>;
const orders = [
  { pair: "BTC/USDT", icon: <BtcCoin />, price: "0.1234567890123", amount: "100,000,000.00", total: "888,888,888.123456", avg: "0.1234567890123", ex: ["888,888,888,888", "/888,888,888,888"] },
  { pair: "MATIC/USDT", icon: <MaticCoin />, price: "0.1234567890123", amount: "100,000,000.00", total: "888,888,888.123456", avg: "0.1234567890123", ex: ["888,888,888,888", "/888,888,888,888"] },
  { pair: "PEPE/USDT", icon: <PepeCoin />, price: "0.1234567890123456789", sp: true, amount: "100,000,000.1234567890", total: "888,888,888.1234567890", st: true, avg: "0.1234567890123456789", ex: ["888,888,888.1234", "/888,888,888.1234"] },
  { pair: "FlOKI/USDT", icon: <FlokiCoin />, wideIcon: true, price: tiny, amount: "100,000,000.1234567890", total: "888,888,888.1234567890", st: true, avg: tiny, ex: ["888,888,888.1234", "/888,888,888.1234"] },
];

/* ---------- footer ---------- */

const Footer = styled.footer`
  height: 24px;
  background: ${c.foot};
  display: flex;
  font: 400 12px/24px ${FONT};
  color: ${c.grey};
  white-space: nowrap;
`;
const Connection = styled.div`
  width: 138px;
  padding-left: 13px;
  display: flex;
  gap: 6px;
  align-items: center;
  color: ${c.green};
  letter-spacing: 0.02px;
`;
const FootIcon = styled.div`
  width: 25px;
  border-left: 1px solid ${c.head};
  border-right: 1px solid ${c.head};
  display: flex;
  align-items: center;
  justify-content: center;
`;
const Ticker = styled.div`
  width: 200px;
  padding-left: 15px;
  display: grid;
  grid-template-columns: 52px 56px 63.5px;
  background: linear-gradient(${c.head}, ${c.head}) right center / 1px 12px no-repeat;
  em { font-style: normal; font-weight: 500; text-align: right; color: ${(p) => (p.$up ? c.green : c.red)}; }
  b { font-weight: 500; text-align: right; }
`;
const Links = styled.div`
  margin-left: auto;
  display: flex;
  > span { display: flex; align-items: center; gap: 4px; padding: 0 8px; }
  > span + span { border-left: 1px solid ${c.head}; }
`;
const tickers = [
  ["BTCUSDT", "+23.13%", "43,391.12"], ["MATICU...", "+13.35%", "0.8964"], ["ETHUSDT", "-0.70%", "203,000..."],
  ["ORDIUSDT", "-5.61%", "2,243,00..."], ["ORNUSDT", "+21.54%", "0.8542"], ["SOLUSDT", "-1.67%", "57,391.12"],
];

/* ---------- phone ---------- */

const Status = styled.div`
  height: 55px;
  padding: 2px 0 0 54px;
  display: flex;
  align-items: center;
`;
const Clock = styled.span`
  width: 97px;
  font: 300 17.5px/24px "Open Sans", sans-serif;
  letter-spacing: -0.3px;
  color: ${c.accent};
`;
const Island = styled.span`
  width: 126px;
  height: 37px;
  margin-right: 30px;
  border-radius: 19px;
  background: #000;
`;
const PhoneHeader = styled.div`
  height: 64px;
  padding: 0 16px;
  background: ${c.head};
  display: flex;
  align-items: center;
  justify-content: space-between;
`;
const PhoneInfo = styled.div`
  height: 136px;
  padding: 12px 16px;
  display: flex;
`;
const PhonePrice = styled.div`
  width: 196px;
  padding-top: 4px;
  border-right: 1px solid ${c.soft};
  strong { display: block; margin: 8px 0 2px; font: 500 16px/20px ${FONT}; color: ${c.red}; }
  small { display: block; font: 400 12px/18px ${FONT}; color: ${c.ink}; white-space: nowrap; }
  small em { font-style: normal; font-weight: 500; color: ${c.red}; margin-left: 4px; }
`;
const PhonePair = styled.div`
  display: flex;
  align-items: center;
  gap: 10px;
  font: 500 16px/20px ${FONT};
  color: ${c.ink};
  span { display: block; font: 400 12px/17px ${FONT}; color: ${c.grey}; }
`;
const PhoneStats = styled.div`
  padding-left: 12px;
  display: flex;
  flex-direction: column;
  gap: 8px;
`;
const Band = styled.div`
  height: 8px;
  background: ${c.gap};
`;
const PhoneTools = styled.div`
  height: 44px;
  padding: 4px 20px 0 19px;
  border-bottom: 1px solid ${c.soft};
  display: flex;
  align-items: center;
  font: 500 16px/20px ${FONT};
`;
const Group = styled.div`
  display: flex;
  align-items: center;
  gap: ${(p) => p.$gap}px;
  margin-left: ${(p) => p.$ml || 0}px;
  ${(p) => p.$right && css`margin-left: auto; font-size: 12px;`}
`;
const Pills = styled.div`
  margin-top: 16px;
  display: flex;
`;
const Pill = styled.span`
  padding: 0 12px;
  height: 40px;
  border-radius: 4px;
  font: 400 16px/39px ${FONT};
  color: ${c.grey};
  ${(p) => p.$on && css`background: ${c.head}; color: ${c.navy}; font-weight: 600; letter-spacing: 0.1px;`}
`;
const HomeBar = styled.div`
  position: absolute;
  left: 137px;
  top: 913px;
  width: 154px;
  height: 5px;
  border-radius: 3px;
  background: #000;
`;

export default function App() {
  return (
    <Stage>
      <GlobalStyle />
      <Title>Online Trading Experience Design</Title>
      <Tablet>
        <TabletScreen>
          <Header>
            <Brand />
            <Nav>
              {["Spot Trading", "Markets", "C2C", "Watch to Earn", "Launchpad"].map((n) => <span key={n}>{n}</span>)}
            </Nav>
            <Dropdown>Assets <Chevron /></Dropdown>
            <Dropdown>Order <Chevron /></Dropdown>
            <IconRow><UserIcon /><BellIcon /><DownloadIcon /><HelpIcon /><GlobeIcon /></IconRow>
          </Header>

          <PairBar>
            <PairInfo>
              <BtcCoin size={30} />
              <div>
                <PairName>BTC/USDT <SortIcon /></PairName>
                <PairSub>Bitcoin <TagIcon /></PairSub>
              </div>
            </PairInfo>
            <PriceCol><strong>0.1234567890123456789</strong>≈$0.123456789012345678</PriceCol>
            <Stat $w={90} $down>24H Change<b>-8.88%</b></Stat>
            <Stat>24H High<b>0.1234567890123456789</b></Stat>
            <Stat>24H Low<b>0.1234567890123456789</b></Stat>
            <Stat>24H Volume (BTC)<b>0.1234567890123456789</b></Stat>
          </PairBar>

          <Body>
            <Column $w={1552}>
              <TopRow>
                <Card $w={1184} $r="0 8px 8px 0">
                  <Toolbar>
                    {["1m", "5m", "15m", "30m", "60m", "1D", "1W", "1M"].map((t, i) => <Chip key={t} $on={i === 0}>{t}</Chip>)}
                    <ToolIcons><SlidersIcon /><FxIcon /><GearIcon /></ToolIcons>
                    <Chip $on>Trading View</Chip>
                    <Chip>Depth</Chip>
                    <Spacer $w={22} />
                    <ExpandIcon />
                  </Toolbar>
                  <Widget />
                </Card>
                <Card $w={360} $r="8px">
                  <Tabs $px={12} items={["Order Book", "Market Trades"]} />
                  <ViewIcons>
                    <ViewIcon left={["#e03131", "#1eba97"]} right={c.navy} />
                    <ViewIcon left={["#bfeadd"]} right="#babdd4" />
                    <ViewIcon left={["#f9c5c3"]} right="#babdd4" />
                  </ViewIcons>
                  <BookHead>Price (USDT)</BookHead>
                  {asks.map((q) => <Quote key={q}>{q}</Quote>)}
                  <LastPrice>19,965.74</LastPrice>
                  {bids.map((q) => <Quote key={q} $up>{q}</Quote>)}
                </Card>
              </TopRow>
              <Card $grow>
                <Tabs $line items={["Open Order", "Order History"]} />
                <Row $head>
                  {["Time", "Pair", "Side", "Price", "Amount", "Total", "Average Price", "Executed/Unexecuted"].map((h) => <span key={h}>{h}</span>)}
                </Row>
                {orders.map((o) => (
                  <Row key={o.pair}>
                    <span>2023-07-01<br />11:02:28</span>
                    <PairCell $wide={o.wideIcon}>{o.icon}{o.pair}</PairCell>
                    <Side>Buy</Side>
                    <Money $small={o.sp}><b>{o.price}</b>USDT</Money>
                    <span>{o.amount}</span>
                    <Money $small={o.st}><b>{o.total}</b>USDT</Money>
                    <Money $small={o.sp}><b>{o.avg}</b>USDT</Money>
                    <span>{o.ex[0]}<br />{o.ex[1]}</span>
                  </Row>
                ))}
              </Card>
            </Column>

            <Column $w={360}>
              <Card $grow $r="8px 0 0 0">
                <Tabs items={["Spot Trading", "Grid Trading"]} />
                <FormRow>
                  <Form $w={328}>
                    <Segment><SegmentItem $on>Buy</SegmentItem><SegmentItem>Sell</SegmentItem></Segment>
                    <Field $mt={72}>19965.74 USDT</Field>
                    <Field $mt={20}>USDT</Field>
                    <SliderWrap><Slider /></SliderWrap>
                    <Deposit>
                      <svg width="14" height="14" viewBox="0 0 14 14"><circle cx="7" cy="7" r="6.800" fill={c.accent} /><path d="M7 3.500v7M3.500 7h7" stroke="#fff" strokeWidth="1.800" /></svg>
                      Deposit
                    </Deposit>
                    <Field $mt={30}>USDT</Field>
                    <Submit>Buy BTC</Submit>
                    <BalanceHead>Balance</BalanceHead>
                    <Balance $double>888,888,888.8888.123456789012<br />34567890</Balance>
                    {[1, 2, 3, 4].map((k) => <Balance key={k}>888,888,888.8888</Balance>)}
                  </Form>
                  <Thumb />
                </FormRow>
              </Card>
              <Card $h={30} />
            </Column>
          </Body>

          <Footer>
            <Connection>
              <svg width="12" height="12" viewBox="0 0 12 12" stroke={c.green} strokeWidth="1.200"><path d="M1 12V9M4.200 12V6.500M7.400 12V4" /><path d="M11 12V1" stroke="#c0d0e8" /></svg>
              Stable connection
            </Connection>
            <FootIcon><SlidersIcon size={14} /></FootIcon>
            {tickers.map(([n, p, v]) => (
              <Ticker key={n} $up={p[0] === "+"}><span>{n}</span><em>{p}</em><b>{v}</b></Ticker>
            ))}
            <Links>
              <span>ZORIX Support</span>
              <span><DownloadIcon size={15} w={2.2} /> Download</span>
            </Links>
          </Footer>
        </TabletScreen>
      </Tablet>

      <Phone>
        <PhoneScreen>
          <Status>
            <Clock>9:41</Clock>
            <Island />
            <svg width="90" height="14" viewBox="0 0 90 14" fill={c.navy}>
              <rect x="1" y="9" width="3.200" height="4" rx="1" /><rect x="6" y="6.500" width="3.200" height="6.500" rx="1" /><rect x="11.500" y="4" width="3.400" height="9" rx="1" /><rect x="17" y="1" width="3.600" height="12" rx="1" />
              <g fill="none" stroke={c.navy} strokeWidth="2.300"><path d="M30 5.300q8.700-7 17.500 0M33.200 8.800q5.500-4.500 11.200 0" /></g>
              <path d="M38.800 13.500L35.800 11q3-2.200 6 0z" />
              <rect x="62" y="1" width="24" height="12" rx="3.500" fill="none" stroke="#b2b8d2" /><rect x="63.500" y="2.500" width="21" height="9" rx="2.200" /><path d="M87.500 5v4.200q1.500-.6 1.500-2.100t-1.500-2.100z" fill="#b2b8d2" />
            </svg>
          </Status>
          <PhoneHeader>
            <Brand small />
            <IconRow><UserIcon /><BellIcon /><HelpIcon /><MenuIcon /></IconRow>
          </PhoneHeader>
          <PhoneInfo>
            <PhonePrice>
              <PhonePair><div>BTC<span>/USDT</span></div><SortIcon width={16} /></PhonePair>
              <strong>19,965.1234567890123<br />456</strong>
              <small>≈$0.123456789012345678<em>-8.88%</em></small>
            </PhonePrice>
            <PhoneStats>
              {["24H High", "24H Low", "24H Volume (BTC)"].map((l) => <Stat key={l} $tight>{l}<b>8,888,888,888.8</b></Stat>)}
            </PhoneStats>
          </PhoneInfo>
          <Band />
          <Tabs $h={44} items={["Chart", "Order Book", "Market Trades", "Info"]} />
          <PhoneTools>
            <Group $gap={5}>1m <Chevron w={2} /></Group>
            <Group $gap={12} $ml={7}><SlidersIcon size={16} /><FxIcon size={16} /><GearIcon size={16} /></Group>
            <Group $gap={4} $right>Trading view <Chevron size={10} /><Spacer $w={8} /><ExpandIcon size={15} /></Group>
          </PhoneTools>
          <Widget small />
          <Band />
          <Tabs items={["Spot Trading", "Grid Trading"]} />
          <FormRow>
            <Form $w={396}>
              <Segment><SegmentItem $on>Buy</SegmentItem><SegmentItem>Sell</SegmentItem></Segment>
              <Pills><Pill $on>Limit</Pill><Pill>Market</Pill></Pills>
            </Form>
            <Thumb />
          </FormRow>
          <HomeBar />
        </PhoneScreen>
      </Phone>
    </Stage>
  );
}
